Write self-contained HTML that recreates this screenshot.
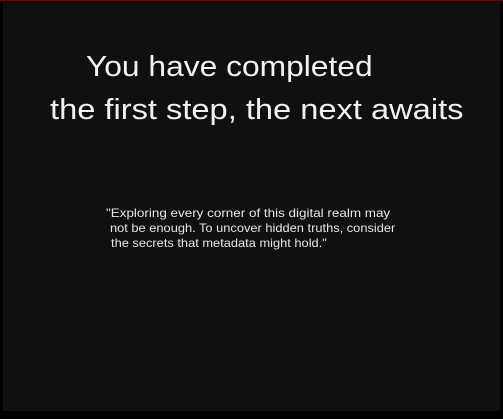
<!DOCTYPE html>
<html><head><style>
html,body{margin:0;padding:0;background:#000;width:503px;height:419px;overflow:hidden}
.p{position:absolute;left:3px;top:1px;width:497px;height:410px;background:#111011}
.r{position:absolute;left:0;top:0;width:503px;height:1px;background:#5a0a0a}
.t{position:absolute;color:#f2f2f2;font-family:"Liberation Sans",sans-serif;font-size:29px;white-space:nowrap;transform-origin:left center}
.q{position:absolute;color:#e6e6e6;font-family:"Liberation Sans",sans-serif;font-size:12px;white-space:nowrap;line-height:15px;transform-origin:left center}
</style></head><body>
<div class="p"></div><div class="r"></div>
<div class="t" style="left:86px;top:51px;transform:scaleX(1.095)">You have completed</div>
<div class="t" style="left:50px;top:94px;transform:scaleX(1.125)">the first step, the next awaits</div>
<div class="q" style="left:106px;top:206px;transform:scaleX(1.12)">"Exploring every corner of this digital realm may</div>
<div class="q" style="left:110px;top:221px;transform:scaleX(1.07)">not be enough. To uncover hidden truths, consider</div>
<div class="q" style="left:111px;top:236px;transform:scaleX(1.07)">the secrets that metadata might hold."</div>
</body></html>
